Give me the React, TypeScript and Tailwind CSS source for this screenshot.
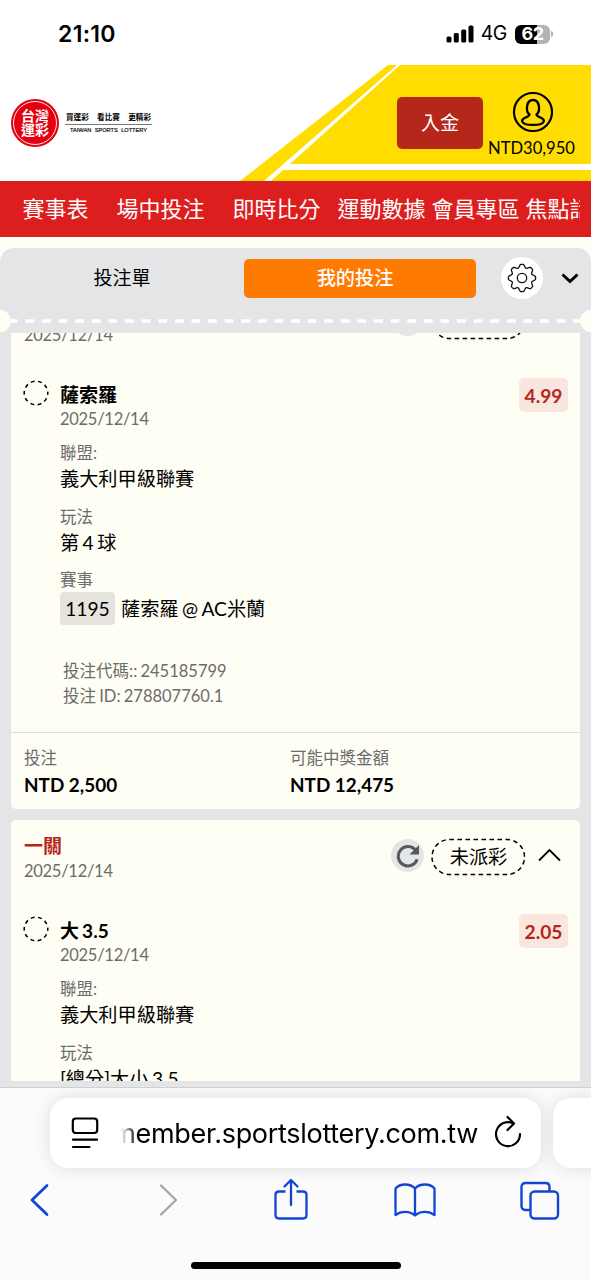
import clsx from "clsx";
import type { ReactNode } from "react";

interface Bet {
  id: string;
  parlay: string;
  date: string;
  pick: string;
  odds: string;
  league: string;
  play: string;
  matchNo: string;
  match: string;
  code: string;
  betId: string;
  stake: string;
  payout: string;
}

const BETS: Bet[] = [
  {
    id: "bet-1",
    parlay: "一關",
    date: "2025/12/14",
    pick: "薩索羅",
    odds: "4.99",
    league: "義大利甲級聯賽",
    play: "第 4 球",
    matchNo: "1195",
    match: "薩索羅 @ AC米蘭",
    code: "245185799",
    betId: "278807760.1",
    stake: "NTD 2,500",
    payout: "NTD 12,475",
  },
  {
    id: "bet-2",
    parlay: "一關",
    date: "2025/12/14",
    pick: "大 3.5",
    odds: "2.05",
    league: "義大利甲級聯賽",
    play: "[總分]大小 3.5",
    matchNo: "",
    match: "",
    code: "",
    betId: "",
    stake: "",
    payout: "",
  },
];

const NAV = [
  { label: "賽事表", gap: "ml-[22.5px]" },
  { label: "場中投注", gap: "ml-[28px]" },
  { label: "即時比分", gap: "ml-[28px]" },
  { label: "運動數據", gap: "ml-[17px]" },
  { label: "會員專區", gap: "ml-[6px]" },
  { label: "焦點話題", gap: "ml-[6px]" },
];

// eight blunt teeth around a 30x30 box
function gearPath(): string {
  const points: string[] = [];
  for (let i = 0; i < 160; i++) {
    const angle = (i / 160) * Math.PI * 2;
    const wave = Math.cos(angle * 8);
    const r = Math.min(13.6, 12.4 + 1.9 * wave);
    points.push(`${(15 + r * Math.cos(angle)).toFixed(2)} ${(15 + r * Math.sin(angle)).toFixed(2)}`);
  }
  return `M${points.join("L")}Z`;
}

function StatusBar() {
  return (
    <div className="flex h-[65px] shrink-0 items-center bg-white pl-[58px] pr-[38px] pt-[3px] font-['Inter',sans-serif]">
      <span className="text-[23px] font-semibold leading-none tracking-[0.3px]">21:10</span>
      <div className="ml-auto flex items-center">
        <svg width="28" height="18" viewBox="0 0 28 18">
          <rect x="0.5" y="11.5" width="5" height="6" rx="1.5" />
          <rect x="7.8" y="8" width="5" height="9.5" rx="1.5" />
          <rect x="15.2" y="4.5" width="5" height="13" rx="1.5" />
          <rect x="22.5" y="0.5" width="5" height="17" rx="1.5" />
        </svg>
        <span className="ml-[7px] text-[19.500px] leading-none tracking-[-0.4px]">4G</span>
        <div className="ml-[8px] flex h-[19px] w-[35px] items-center justify-center rounded-[6px] bg-[linear-gradient(90deg,#000_62%,#b3b3b3_62%)] text-[18px] font-bold leading-none tracking-[-0.5px] text-white">
          62
        </div>
        <div className="ml-[1px] h-[6px] w-[2px] rounded-r-full bg-[#b3b3b3]" />
      </div>
    </div>
  );
}

function Logo() {
  return (
    <div className="flex items-center">
      <div className="flex size-[48px] items-center justify-center rounded-full bg-[#e2000f] p-[2px]">
        <div className="flex size-[44px] flex-col items-center justify-center rounded-full border border-white/90 text-[14px] font-bold leading-[14px] text-white">
          <span className="h-[14px]">台灣</span>
          <span className="h-[14px]">運彩</span>
        </div>
      </div>
      <div className="ml-[6px] flex w-[87px] flex-col items-center">
        <div className="flex h-[14px] w-full justify-between whitespace-nowrap px-[1px] text-[7.6px] font-bold leading-[14px]">
          <span>買運彩</span>
          <span>看比賽</span>
          <span>更精彩</span>
        </div>
        <div className="h-px w-full bg-[#777]" />
        <div className="h-[11px] whitespace-nowrap font-['Liberation_Sans',sans-serif] text-[5.6px] leading-[10px] text-[#111] [-webkit-text-stroke:0.2px_#111] [word-spacing:2px]">
          TAIWAN SPORTS LOTTERY
        </div>
      </div>
    </div>
  );
}

function Header() {
  return (
    <header className="relative flex h-[116px] shrink-0 bg-white">
      <svg className="absolute inset-0" width="591" height="116" viewBox="0 0 591 116">
        <path d="M388 0H397L264 116H240Z" fill="#ffdd00" />
        <path d="M400 0H591V99H290Z" fill="#ffdd00" />
        <path d="M283 105H591V116H271Z" fill="#ffdd00" />
      </svg>
      <div className="relative flex w-full">
        <div className="ml-[11px] mt-[34px] self-start">
          <Logo />
        </div>
        <button className="ml-auto mt-[32px] h-[52px] w-[86px] rounded-[5px] bg-[#b5271b] text-[19px] text-white">
          入金
        </button>
        <div className="mr-[16px] flex w-[92px] flex-col items-end">
          <svg className="mr-[21px] mt-[26px]" width="42" height="42" viewBox="0 0 42 42" fill="none" stroke="#000">
            <circle cx="21" cy="21" r="19" strokeWidth="2.2" />
            <path
              d="M17.500 23.500C13.500 20.500 14 9 21 9S28.500 20.500 24.500 23.500C24.500 25 26 25.500 28.500 26.500C31.500 27.800 32.300 29 31.800 30.500C30.500 35 11.500 35 10.200 30.500C9.700 29 10.500 27.800 13.500 26.500C16 25.500 17.500 25 17.500 23.500Z"
              strokeWidth="2.3"
            />
          </svg>
          <span className="mt-[4px] whitespace-nowrap text-[16.600px] leading-[22px]">NTD30,950</span>
        </div>
      </div>
    </header>
  );
}

function NavBar() {
  return (
    <nav className="h-[56px] shrink-0 bg-[#dc1e1e] pr-[11px]">
      <div className="flex h-full items-center overflow-hidden">
        {NAV.map((item) => (
          <a key={item.label} className={clsx("shrink-0 text-[22px] leading-[30px] text-white", item.gap)}>
            {item.label}
          </a>
        ))}
      </div>
    </nav>
  );
}

function SlipTabs() {
  return (
    <div className="flex h-[60px] items-center">
      <div className="w-[244px] text-center text-[19px]">投注單</div>
      <div className="flex h-[39px] w-[232px] items-center justify-center rounded-[5px] bg-[#ff7a00] pr-[10px] text-[19.200px] font-medium text-white">
        我的投注
      </div>
      <div className="ml-[25px] flex size-[42px] items-center justify-center rounded-full bg-white">
        <svg width="30" height="30" viewBox="0 0 30 30" fill="none" stroke="#111" strokeWidth="1.300" strokeLinejoin="round">
          <path d={gearPath()} />
          <circle cx="15" cy="15" r="4.700" />
        </svg>
      </div>
      <svg className="ml-[18px]" width="18" height="12" viewBox="0 0 18 12" fill="none" stroke="#000" strokeWidth="3">
        <path d="M1.500 2.500L9 9.500L16.500 2.500" />
      </svg>
    </div>
  );
}

function Perforation() {
  return (
    <div className="flex h-[25px] items-center justify-between">
      <div className="h-[22px] w-[11px] rounded-r-full bg-[#fffef5]" />
      <svg width="569" height="4" viewBox="0 0 569 4">
        <path d="M0 2H569" stroke="#fff" strokeWidth="3.500" strokeDasharray="8.700 7.900" strokeDashoffset="2.100" />
      </svg>
      <div className="h-[22px] w-[11px] rounded-l-full bg-[#fffef5]" />
    </div>
  );
}

function Field({ label, children }: { label: string; children: ReactNode }) {
  return (
    <div className="h-[63.5px]">
      <div className="h-[25px] text-[16.5px] leading-[26px] text-[#6c6c6c]">{label}</div>
      <div className="h-[27px] text-[19.200px] leading-[27px] [word-spacing:-1.5px]">{children}</div>
    </div>
  );
}

function Total({ label, value, className }: { label: string; value: string; className?: string }) {
  return (
    <div className={className}>
      <div className="h-[26px] text-[16.5px] leading-[26px] text-[#6c6c6c]">{label}</div>
      <div className="h-[30px] text-[18.900px] font-bold leading-[28px]">{value}</div>
    </div>
  );
}

function BetCard({ bet }: { bet: Bet }) {
  return (
    <article className="h-[525px] shrink-0 overflow-hidden rounded-[5px] bg-[#fffef5]">
      <div className="flex h-[95px] pl-[13px] pr-[19px]">
        <div className="mt-[13px]">
          <div className="h-[26px] text-[19px] font-bold leading-[26px] text-[#b5271b]">{bet.parlay}</div>
          <div className="h-[24px] text-[16.5px] leading-[24px] tracking-[-0.28px] text-[#6c6c6c]">{bet.date}</div>
        </div>
        <div className="ml-auto mt-[18px] flex h-[38px] items-center">
          <div className="mr-[7px] mt-[-3px] flex size-[33px] items-center justify-center rounded-full bg-[#e4e5e7]">
            <svg width="24" height="24" viewBox="0 0 24 24">
              <path d="M19.800 6.500A9.700 9.700 0 1 0 21.200 15.200" fill="none" stroke="#55585c" strokeWidth="3" />
              <path d="M23 1V10.500H13.500Z" fill="#55585c" />
            </svg>
          </div>
          <div className="relative flex h-[38px] w-[95px] items-center justify-center text-[19.200px]">
            <svg className="absolute inset-0" width="95" height="38" viewBox="0 0 95 38">
              <rect
                x="1"
                y="1.500"
                width="92.500"
                height="35"
                rx="17.500"
                fill="none"
                stroke="#000"
                strokeWidth="1.500"
                strokeDasharray="4.500 3.500"
              />
            </svg>
            <span>未派彩</span>
          </div>
          <svg className="ml-[12px] mt-[-4px]" width="23" height="14" viewBox="0 0 23 14" fill="none" stroke="#000" strokeWidth="1.800">
            <path d="M1 12.500L11.500 2L22 12.500" />
          </svg>
        </div>
      </div>

      <div className="flex h-[353px] pl-[12px] pr-[12px]">
        <svg className="mt-[1px] shrink-0" width="26" height="26" viewBox="0 0 26 26">
          <circle cx="13" cy="13" r="11.800" fill="none" stroke="#000" strokeWidth="1.500" strokeDasharray="3.900 3.510" strokeDashoffset="1.950" />
        </svg>
        <div className="ml-[11px]">
          <div className="mt-[3px] h-[25px] text-[19px] font-bold leading-[25px] [word-spacing:-1.5px]">{bet.pick}</div>
          <div className="mb-[9px] h-[24px] text-[16.5px] leading-[24px] tracking-[-0.28px] text-[#6c6c6c]">{bet.date}</div>
          <Field label="聯盟:">{bet.league}</Field>
          <Field label="玩法">{bet.play}</Field>
          {bet.match && (
            <>
              <Field label="賽事">
                <div className="flex items-center whitespace-nowrap">
                  <span className="mr-[6px] flex h-[33px] w-[55px] items-center justify-center rounded-[4px] bg-[#e6e3dc]">
                    {bet.matchNo}
                  </span>
                  {bet.match}
                </div>
              </Field>
              <div className="ml-[3px] mt-[28px] text-[16.5px] leading-[25px] text-[#6c6c6c] [word-spacing:-1px]">
                <div>投注代碼:: {bet.code}</div>
                <div>投注 ID: {bet.betId}</div>
              </div>
            </>
          )}
        </div>
        <div className="ml-auto mt-[-1px] flex h-[34px] w-[49px] items-center justify-center rounded-[5px] bg-[#f8e6df] pt-[2px] text-[19.200px] font-bold text-[#b5271b]">
          {bet.odds}
        </div>
      </div>

      <div className="flex h-[77px] border-t border-[#dedede] pl-[13px] pt-[12px]">
        <Total className="w-[266px]" label="投注" value={bet.stake} />
        <Total label="可能中獎金額" value={bet.payout} />
      </div>
    </article>
  );
}

function BrowserBar() {
  return (
    <footer className="flex h-[193px] shrink-0 flex-col overflow-hidden border-t border-[#cfd0d2] bg-[#fbfbfb]">
      <div className="mt-[10px] flex h-[70px] shrink-0 pl-[50px]">
        <div className="flex w-[491px] shrink-0 items-center rounded-[18px] bg-white pl-[21px] pr-[19px] shadow-[0_0_18px_rgba(0,0,0,0.12)]">
          <svg width="28" height="32" viewBox="0 0 28 32" fill="none" stroke="#000" strokeWidth="2.200" strokeLinecap="round">
            <rect x="1.800" y="1.500" width="24.400" height="14.500" rx="3" />
            <path d="M2 22.700H26M2 30H18.500" />
          </svg>
          <div className="ml-[22px] mt-[3px] flex h-[40px] w-[357px] items-center justify-end overflow-hidden whitespace-nowrap font-['Inter',sans-serif] text-[27px] tracking-[-0.3px] [mask-image:linear-gradient(90deg,transparent,#000_16px)]">
            member.sportslottery.com.tw
          </div>
          <svg className="ml-auto mt-[-2px]" width="28" height="34" viewBox="0 0 28 34" fill="none" stroke="#000" strokeWidth="2.200" strokeLinecap="round" strokeLinejoin="round">
            <path d="M26 19A12 12 0 1 1 19.500 8.500" />
            <path d="M13.500 2L20 8.500L13.500 15" />
          </svg>
        </div>
        <div className="ml-[12px] w-[60px] shrink-0 rounded-[18px] bg-white shadow-[0_0_18px_rgba(0,0,0,0.12)]" />
      </div>
      <div className="mt-[8px] flex h-[48px] shrink-0 items-center pl-[29px] text-[#1245d2]">
        <svg width="20" height="34" viewBox="0 0 20 34" fill="none" stroke="currentColor" strokeWidth="2.800" strokeLinecap="round" strokeLinejoin="round">
          <path d="M18 2.500L3 17L18 31.500" />
        </svg>
        <svg className="ml-[110px]" width="20" height="34" viewBox="0 0 20 34" fill="none" stroke="#a6a6a6" strokeWidth="2.400" strokeLinecap="round" strokeLinejoin="round">
          <path d="M2 2.500L17 17L2 31.500" />
        </svg>
        <svg className="mb-[2px] ml-[95px]" width="34" height="42" viewBox="0 0 34 42" fill="none" stroke="currentColor" strokeWidth="2.300" strokeLinecap="round" strokeLinejoin="round">
          <path d="M11.500 13.500H5Q1.500 13.500 1.500 17V37Q1.500 40.500 5 40.500H29Q32.500 40.500 32.500 37V17Q32.500 13.500 29 13.500H22.500" strokeLinecap="butt" />
          <path d="M17 27V2.500M10.500 8.500L17 2L23.500 8.500" />
        </svg>
        <svg className="ml-[86px]" width="42" height="36" viewBox="0 0 42 36" fill="none" stroke="currentColor" strokeWidth="2.300" strokeLinejoin="round">
          <path d="M21 6.500Q17.500 2.500 11 2.500Q5 2.500 1.500 6.500V33Q5.500 29.800 11 29.800Q17 29.800 21 33.500Q25 29.800 31 29.800Q36.500 29.800 40.500 33V6.500Q37 2.500 31 2.500Q24.500 2.500 21 6.500ZV33.500" />
        </svg>
        <svg className="ml-[83.5px] mt-[1px]" width="40" height="40" viewBox="0 0 40 40" fill="none" stroke="currentColor" strokeWidth="2.400">
          <path d="M10.500 29H5.500Q1.500 29 1.500 25V6Q1.500 2 5.500 2H25.500Q29.500 2 29.500 6V10.500" />
          <rect x="10.500" y="10.500" width="27.500" height="27" rx="4" />
        </svg>
      </div>
      <div className="mx-auto mr-[190px] mt-[38px] h-[7px] w-[210px] shrink-0 rounded-full bg-black" />
    </footer>
  );
}

export default function App() {
  return (
    <div
      lang="zh-Hant"
      className="flex h-[1280px] w-[591px] flex-col overflow-hidden bg-[#fffef5] font-['Lato','Noto_Sans_CJK_TC',sans-serif] text-black"
    >
      <StatusBar />
      <Header />
      <NavBar />
      <main className="mt-[11px] flex h-[839px] shrink-0 flex-col rounded-t-[14px] bg-[#e4e5e7]">
        <SlipTabs />
        <Perforation />
        <div className="mx-[11px] h-[748px] shrink-0 overflow-hidden">
          {/* list is scrolled so that the first card's header sits under the tabs */}
          <div className="mt-[-49px] flex flex-col gap-[11px]">
            {BETS.map((bet) => (
              <BetCard key={bet.id} bet={bet} />
            ))}
          </div>
        </div>
      </main>
      <BrowserBar />
    </div>
  );
}
